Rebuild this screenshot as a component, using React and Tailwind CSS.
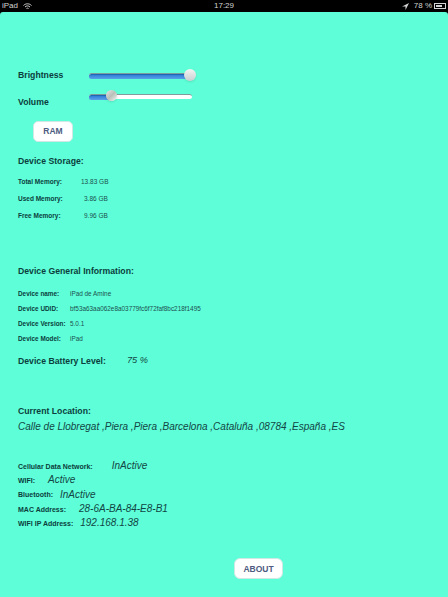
import React from 'react';

const FONT = { fontFamily: '"Liberation Sans", Arial, sans-serif' };

const Slider = ({ percent }) => (
  <div className="h-[5px] w-[103px] rounded-full border-t border-[#7f9a9a] bg-white">
    <div
      className="h-[5px] rounded-full border-t border-[#1f66b4] bg-gradient-to-b from-[#2f7fd8] to-[#5aa2e8]"
      style={{ width: `${percent}%` }}
    />
  </div>
);

const MemoryRow = ({ label, value, valueClass }) => (
  <div className="flex h-[17px] items-center text-[6.5px] leading-none">
    <span className="w-[62px] font-bold text-[#0b3d3d]">{label}</span>
    <span className={`text-[#1c4f4f] ${valueClass}`}>{value}</span>
  </div>
);

const InfoRow = ({ label, value }) => (
  <div className="flex h-[15px] items-center text-[6.4px] leading-none">
    <span className="w-[52px] whitespace-nowrap font-bold text-[#0b3d3d]">{label}</span>
    <span className="whitespace-nowrap text-[#1c4f4f]">{value}</span>
  </div>
);

const NetRow = ({ label, value, gap }) => (
  <div className="flex h-[14.3px] items-center leading-none">
    <span className="whitespace-nowrap text-[7px] font-bold text-[#0b3d3d]">{label}</span>
    <span className={`whitespace-nowrap text-[10px] italic text-[#124545] ${gap}`}>{value}</span>
  </div>
);

const App = () => {
  return (
    <div className="h-[597px] w-[448px] overflow-hidden bg-black" style={FONT}>
      {/* status bar */}
      <div className="flex h-[12px] items-center justify-between px-[2px] text-[8px] leading-none text-[#d4d4d4]">
        <div className="flex w-[60px] items-center gap-[5px]">
          <span>iPad</span>
          <svg width="9" height="7" viewBox="0 0 18 14" fill="none" stroke="#d4d4d4" strokeWidth="2">
            <path d="M1 5c4.500-4.500 11.500-4.500 16 0" />
            <path d="M4 8c3-3 7-3 10 0" />
            <path d="M7 11c1-1 3-1 4 0" />
          </svg>
        </div>
        <span>17:29</span>
        <div className="flex w-[60px] items-center justify-end gap-[2px]">
          <svg width="7" height="7" viewBox="0 0 10 10" fill="#d4d4d4">
            <path d="M10 0 0 5h5v5z" />
          </svg>
          <span className="ml-[3px]">78 %</span>
          <div className="flex h-[6px] w-[12px] items-center border border-[#d4d4d4] p-px">
            <div className="h-full w-[78%] bg-[#d4d4d4]" />
          </div>
        </div>
      </div>

      {/* page */}
      <div className="h-[585px] rounded-t-[3px] bg-[#5effd8] pl-[18px] pt-[56px]">
        <div className="flex h-[14px] items-center">
          <span className="w-[71px] text-[8.7px] font-bold leading-none text-[#0b3d3d]">Brightness</span>
          <div className="relative">
            <Slider percent={97} />
            <div className="absolute -top-[4px] left-[95px] h-[12px] w-[12px] rounded-full bg-gradient-to-b from-[#f4f4f4] to-[#c9cfcf] shadow-sm" />
          </div>
        </div>
        <div className="mt-[6px] flex h-[20px] items-end">
          <span className="w-[71px] pb-[1px] text-[8.7px] font-bold leading-none text-[#0b3d3d]">Volume</span>
          <div className="relative mb-[9px]">
            <Slider percent={20} />
            <div className="absolute -top-[4px] left-[17px] h-[11px] w-[11px] rounded-full bg-gradient-to-br from-[#e8e8e8] via-[#b9c0b8] to-[#f4f4f4] shadow-sm" />
          </div>
        </div>

        <button className="ml-[15px] mt-[13px] flex h-[21px] w-[40px] items-center justify-center rounded-[5px] border border-[#cfe8e4] bg-white text-[8.5px] font-bold text-[#4d5b80]">
          RAM
        </button>

        <h2 className="mt-[13px] h-[12px] text-[8.7px] font-bold leading-[12px] text-[#0b3d3d]">Device Storage:</h2>
        <div className="mt-[7px]">
          <MemoryRow label="Total Memory:" value="13.83 GB" valueClass="ml-[1px]" />
          <MemoryRow label="Used Memory:" value="3.86 GB" valueClass="ml-[4px]" />
          <MemoryRow label="Free Memory:" value="9.96 GB" valueClass="ml-[4px]" />
        </div>

        <h2 className="mt-[40px] h-[12px] text-[8.7px] font-bold leading-[12px] text-[#0b3d3d]">Device General Information:</h2>
        <div className="mt-[10px]">
          <InfoRow label="Device name:" value="iPad de Amine" />
          <InfoRow label="Device UDID:" value="bf53a63aa062e8a03779fc6f72faf8bc218f1495" />
          <InfoRow label="Device Version:" value="5.0.1" />
          <InfoRow label="Device Model:" value="iPad" />
        </div>
        <div className="mt-[7px] flex h-[14px] items-center leading-none">
          <span className="w-[109px] text-[8.7px] font-bold text-[#0b3d3d]">Device Battery Level:</span>
          <span className="text-[9.2px] italic text-[#124545]">75 %</span>
        </div>

        <h2 className="mt-[37px] h-[12px] text-[8.7px] font-bold leading-[12px] text-[#0b3d3d]">Current Location:</h2>
        <p className="mt-[4px] h-[12px] whitespace-nowrap text-[10px] italic leading-[12px] text-[#124545]">
          Calle de Llobregat ,Piera ,Piera ,Barcelona ,Cataluña ,08784 ,España ,ES
        </p>

        <div className="mt-[26px]">
          <NetRow label="Cellular Data Network:" value="InActive" gap="ml-[19px]" />
          <NetRow label="WIFI:" value="Active" gap="ml-[13px]" />
          <NetRow label="Bluetooth:" value="InActive" gap="ml-[7px]" />
          <NetRow label="MAC Address:" value="28-6A-BA-84-E8-B1" gap="ml-[13px]" />
          <NetRow label="WIFI IP Address:" value="192.168.1.38" gap="ml-[7px]" />
        </div>

        <button className="ml-[216px] mt-[28px] flex h-[21px] w-[49px] items-center justify-center rounded-[6px] border border-[#cfe8e4] bg-white text-[8.5px] font-bold text-[#4d5b80]">
          ABOUT
        </button>
      </div>
    </div>
  );
};

export default App;
